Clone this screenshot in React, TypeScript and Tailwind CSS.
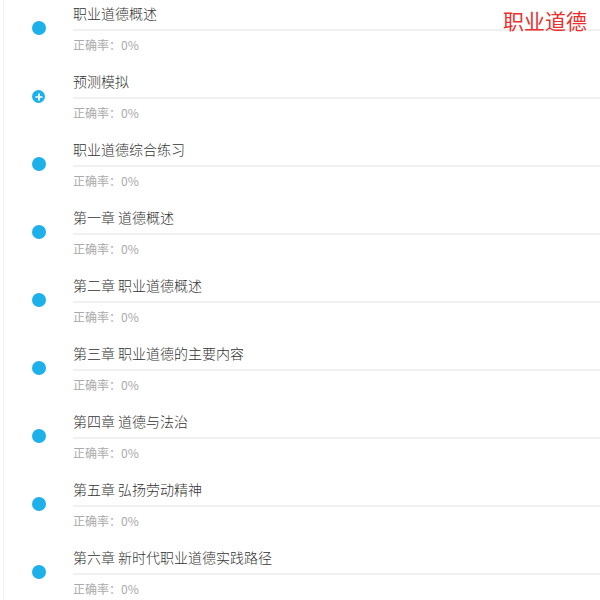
import { Plus } from "lucide-react";

const chapters = [
  { title: "职业道德概述", icon: "dot" },
  { title: "预测模拟", icon: "plus" },
  { title: "职业道德综合练习", icon: "dot" },
  { title: "第一章 道德概述", icon: "dot" },
  { title: "第二章 职业道德概述", icon: "dot" },
  { title: "第三章 职业道德的主要内容", icon: "dot" },
  { title: "第四章 道德与法治", icon: "dot" },
  { title: "第五章 弘扬劳动精神", icon: "dot" },
  { title: "第六章 新时代职业道德实践路径", icon: "dot" },
];

export default function App() {
  return (
    <div
      className="relative h-[600px] w-[600px] overflow-hidden bg-white"
      style={{ fontFamily: '"Noto Sans CJK SC", "Noto Sans", sans-serif' }}
    >
      <div className="ml-[3px] h-full border-l border-[#f2f2f2]">
        {chapters.map((c) => (
          <ChapterRow key={c.title} title={c.title} icon={c.icon} />
        ))}
      </div>
      <div className="absolute right-[13px] top-[5px] text-[21px] leading-[30px] text-[#e8312f]">
        职业道德
      </div>
    </div>
  );
}

function ChapterRow({ title, icon }: { title: string; icon: string }) {
  return (
    <div className="flex h-[68px]">
      <div className="flex w-[69px] shrink-0 items-start justify-center pt-[21px]">
        {icon === "plus" ? (
          <span className="mt-[1px] flex h-[13px] w-[13px] items-center justify-center rounded-full bg-[#1eb0e8]">
            <Plus className="h-[10px] w-[10px] text-white" strokeWidth={4} />
          </span>
        ) : (
          <span className="block h-[14px] w-[14px] rounded-full bg-[#1eb0e8]" />
        )}
      </div>
      <div className="flex-1">
        <div className="pt-[3px] text-[14px] font-light leading-[20px] text-[#333]">{title}</div>
        <div className="mt-[6px] h-[2px] bg-[#f0f0f0]" />
        <div className="mt-[6px] text-[12px] font-normal leading-[16px] text-[#aaa]">
          正确率：0%
        </div>
      </div>
    </div>
  );
}
